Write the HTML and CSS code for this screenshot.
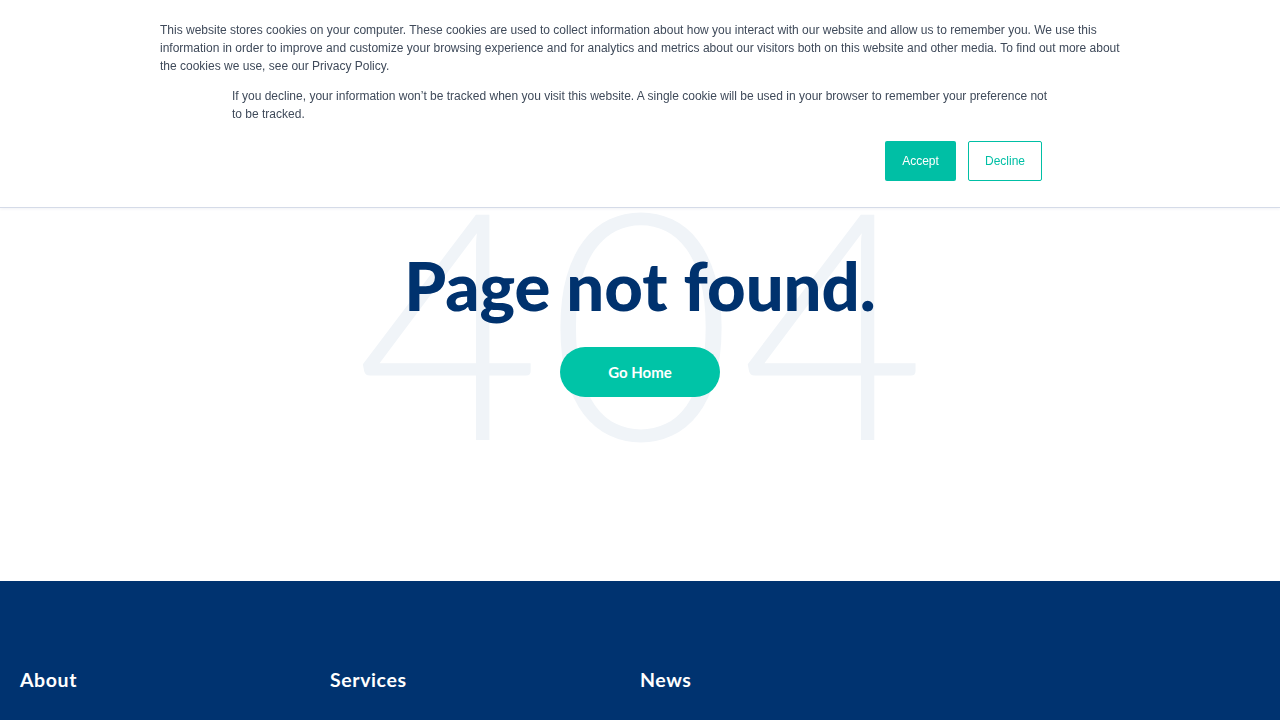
FILE: index.html
```html
<!DOCTYPE html>
<html lang="en">
<head>
    <meta charset="UTF-8">
    <meta name="viewport" content="width=device-width, initial-scale=1.0">
    <title>Page not found</title>
    <link rel="stylesheet" href="styles.css">
</head>
<body>

    <!-- Cookie banner -->
    <div class="cookie-banner">
        <p class="cookie-text">This website stores cookies on your computer. These cookies are used to collect information about how you interact with our website and allow us to remember you. We use this information in order to improve and customize your browsing experience and for analytics and metrics about our visitors both on this website and other media. To find out more about the cookies we use, see our Privacy Policy.</p>
        <div class="cookie-inner">
            <p class="cookie-text">If you decline, your information won’t be tracked when you visit this website. A single cookie will be used in your browser to remember your preference not to be tracked.</p>
            <div class="cookie-actions">
                <button class="btn-accept">Accept</button>
                <button class="btn-decline">Decline</button>
            </div>
        </div>
    </div>

    <!-- 404 -->
    <main class="not-found">
        <div class="hero">
            <span class="big-404">404</span>
            <h1>Page not found.</h1>
            <a href="#" class="btn-home">Go Home</a>
        </div>
    </main>

    <footer class="footer">
        <div class="footer-cols">
            <h3>About</h3>
            <h3>Services</h3>
            <h3>News</h3>
        </div>
    </footer>

</body>
</html>
```

FILE: styles.css
```css
body {
    margin: 0;
    padding: 0;
    font-family: Lato, "Open Sans", sans-serif;
    background-color: #fff;
}
.cookie-banner {
    position: fixed;
    top: 0;
    left: 0;
    right: 0;
    z-index: 10;
    background-color: #fff;
    border-bottom: 1px solid #d5dbe8;
    box-shadow: 0 1px 3px rgba(0, 40, 100, 0.06);
    padding: 21px 0 0;
    height: 186px;
}
.cookie-text {
    margin: 0;
    font-family: "Liberation Sans", Arial, sans-serif;
    font-size: 12px;
    line-height: 18px;
    color: #3f4a5a;
}
.cookie-banner > .cookie-text {
    width: 965px;
    margin-left: 160px;
}
.cookie-inner {
    width: 816px;
    margin: 12px 0 0 232px;
}
.cookie-actions {
    display: flex;
    justify-content: flex-end;
    gap: 12px;
    margin-top: 18px;
    padding-right: 6px;
}
.cookie-actions button {
    font-family: "Liberation Sans", Arial, sans-serif;
    font-size: 12px;
    height: 40px;
    border-radius: 2px;
    cursor: pointer;
}
.btn-accept {
    width: 71px;
    background-color: #00bfa5;
    color: #fff;
    border: none;
}
.btn-decline {
    width: 74px;
    background-color: #fff;
    color: #00bfa5;
    border: 1px solid #00bfa5;
}
.not-found {
    height: 581px;
    display: flex;
    justify-content: center;
}
.hero {
    position: relative;
    padding-top: 240px;
    text-align: center;
}
.big-404 {
    position: absolute;
    left: 50%;
    top: 158px;
    transform: translateX(calc(-50% + 5px));
    font-family: Lato, sans-serif;
    font-weight: 300;
    font-size: 318px;
    line-height: 1;
    letter-spacing: 8px;
    color: #f0f4f8;
    z-index: 0;
    white-space: nowrap;
}
.hero h1 {
    position: relative;
    margin: 0;
    font-size: 67px;
    line-height: 90px;
    font-weight: 900;
    color: #00326e;
    white-space: nowrap;
}
.btn-home {
    position: relative;
    display: inline-block;
    margin-top: 17px;
    width: 160px;
    height: 50px;
    line-height: 50px;
    border-radius: 25px;
    background-color: #00c4a7;
    color: #fff;
    font-weight: 700;
    font-size: 15px;
    text-decoration: none;
}
.footer {
    background-color: #003370;
    height: 200px;
    padding: 87px 20px 0;
}
.footer-cols {
    display: grid;
    grid-template-columns: 310px 310px 310px;
}
.footer h3 {
    margin: 0;
    color: #fff;
    font-size: 19.5px;
    font-weight: 700;
    letter-spacing: 0.6px;
}
```
